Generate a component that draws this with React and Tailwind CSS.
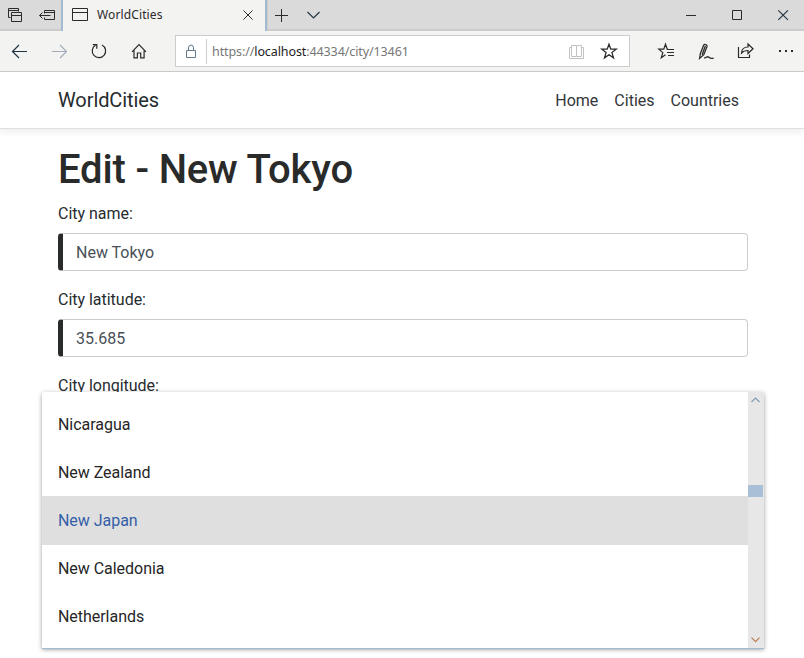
const STROKE = "#2b2b2b";

// Each icon's viewBox uses the coordinates of the browser window.
function Glyph({ x, y, w, h, color = STROKE, sw = 1, children }) {
  return (
    <svg
      className="block shrink-0"
      width={w}
      height={h}
      viewBox={`${x} ${y} ${w} ${h}`}
      fill="none"
      stroke={color}
      strokeWidth={sw}
      aria-hidden="true"
    >
      {children}
    </svg>
  );
}

function TabBar() {
  return (
    <div className="flex h-[31px] border-b-2 border-[#cdcccb] bg-[#dadada]">
      <div className="flex h-[31px] w-[63px] shrink-0 border-r-2 border-[#a3bbd2]">
        <Glyph x={0} y={0} w={30} h={31}>
          <path d="M10.5 17.5h-2v-9h10v3M8.5 10.5h10" />
          <path d="M11.5 12.5h10v9h-10zM11.5 15.5h10" />
        </Glyph>
        <Glyph x={30} y={0} w={31} h={31}>
          <path d="M44.5 13.5v-3h10v9h-10v-2M44.5 12.5h10M39.5 15.5h11M42.5 12.5l-3 3 3 3" />
        </Glyph>
      </div>
      <div className="flex h-[31px] w-[202px] shrink-0 bg-[#f3f3f2] font-['Noto_Sans','Open_Sans',sans-serif]">
        <Glyph x={63} y={0} w={34} h={31}>
          <path d="M72.5 8.5h15v12h-15zM72.5 12.5h15" />
        </Glyph>
        <span className="w-[140px] text-[12px] leading-[30px] tracking-[0.12px] text-[#2b2b2b]">WorldCities</span>
        <Glyph x={237} y={0} w={28} h={31}>
          <path d="M243.5 10.5l9 9M252.5 10.5l-9 9" />
        </Glyph>
      </div>
      <div className="h-[31px] w-[3px] shrink-0 border-l-2 border-[#a3bbd2] bg-[#cdcccb]" />
      <Glyph x={268} y={0} w={30} h={31}>
        <path d="M275 15.5h13M281.5 9v13" />
      </Glyph>
      <Glyph x={298} y={0} w={30} h={31} color="#243744" sw={1.2}>
        <path d="M307.5 12l6 6 6-6" />
      </Glyph>
      <div className="flex-1" />
      <Glyph x={668} y={0} w={46} h={31}>
        <path d="M686 15.5h10" />
      </Glyph>
      <Glyph x={714} y={0} w={46} h={31}>
        <path d="M732.5 10.5h9v9h-9z" />
      </Glyph>
      <Glyph x={760} y={0} w={44} h={31} color="#243744" sw={1.2}>
        <path d="M778.3 10.3l9.6 9.6M787.9 10.3l-9.6 9.6" />
      </Glyph>
    </div>
  );
}

function AddressBar() {
  return (
    <div className="flex h-8 w-[455px] shrink-0 items-center border border-[#cccccc] bg-white">
      <Glyph x={176} y={36} w={30} h={30} color="#64788c">
        <path d="M186.5 50.5h9v7h-9zM188.5 50.5v-2.5a2.5 3 0 0 1 5 0v2.5" />
      </Glyph>
      <div className="h-[25px] w-px bg-[#cccccc]" />
      <span className="ml-[5px] flex-1 pt-px font-['Noto_Sans','Open_Sans',sans-serif] text-[12.5px] leading-[30px] tracking-[-0.1px] text-[#777777]">
        https://<span className="text-[#222222]">localhost</span>:44334/city/13461
      </span>
      <Glyph x={560} y={36} w={33} h={30} color="#c2c2c2">
        <path d="M571.5 45.5h5v11h-5zM576.5 45.5h5v11h-5M571.5 47.5h-2v11h14v-11h-2" />
      </Glyph>
      <Glyph x={593} y={36} w={36} h={30} sw={1.3}>
        <path d="M609 44.2l1.8 5h5.4l-4.3 3.4 1.6 5.3-4.5-3.2-4.5 3.2 1.6-5.3-4.3-3.4h5.4z" />
      </Glyph>
    </div>
  );
}

function Toolbar() {
  return (
    <div className="flex h-[41px] items-center border-b border-[#cccccc] bg-[#f3f3f2]">
      <Glyph x={0} y={31} w={40} h={40} sw={1.2} color="#1f3442">
        <path d="M27 51.5H12.5M19 45l-6.5 6.5L19 58" />
      </Glyph>
      <Glyph x={40} y={31} w={40} h={40} sw={1.1} color="#a0adb9">
        <path d="M52 51.5h14.5M60 45l6.5 6.5L60 58" />
      </Glyph>
      <Glyph x={80} y={31} w={40} h={40} sw={1.2}>
        <path d="M102 45a6.7 6.7 0 1 1-6.5.2M92.8 44.7h4v4" />
      </Glyph>
      <Glyph x={120} y={31} w={55} h={40} sw={1.2}>
        <path d="M132 51.8l7-7.2 7 7.2M134 50.5v7.3h3.4v-4.8h3.3v4.8h3.4v-7.3" />
      </Glyph>
      <AddressBar />
      <Glyph x={630} y={31} w={56} h={40} sw={1.2}>
        <path d="M668 49.2h-.8l-1.7-5-1.7 5h-5l4 3.4-1.5 5.2 4.2-3.1M667 49.5h7M667 52.5h7M668 55.5h6" />
      </Glyph>
      <Glyph x={686} y={31} w={38} h={40} sw={1.3}>
        <path d="M699.6 58.4l.8-4.9 3.2-8.2c.8-1.7 3.9-.6 3.4 1.2l-3.2 8.2-4.2 3.7zM705.3 46l-3.2 8.8" />
        <path d="M704.2 57.6c1.6.9 2.3-1.2 3.9-.8 1.7.5 1 2.2 5.6 1.3" />
      </Glyph>
      <Glyph x={724} y={31} w={42} h={40} sw={1.2}>
        <path d="M738.5 47v10.5h11v-3M741.5 53c.3-4 3-6 6.5-6v-3l5 4.7-5 4.8v-3c-3 0-5 .8-6.5 2.5z" />
      </Glyph>
      <Glyph x={766} y={31} w={38} h={40} color="none">
        <path fill={STROKE} d="M779 50h2v2h-2zM785 50h2v2h-2zM791 50h2v2h-2z" />
      </Glyph>
    </div>
  );
}

function Field({ label, value }) {
  return (
    <div className="mb-4">
      <label className="mb-[7px] block pt-px leading-6 tracking-[-0.02px]">{label}</label>
      <input
        readOnly
        defaultValue={value}
        className="block h-[38px] w-full rounded border border-l-[5px] border-[#cccccc] border-l-[#292b2a] bg-white px-[13px] leading-6 text-[#495057] outline-none"
      />
    </div>
  );
}

const COUNTRIES = ["Nicaragua", "New Zealand", "New Japan", "New Caledonia", "Netherlands"];

function CountryPanel() {
  return (
    <div className="absolute top-[392px] left-[42px] flex h-64 w-[722px] rounded-t-[2px] bg-white shadow-[0_1px_0_#a3bbd2,0_2px_4px_-1px_rgba(0,0,0,0.3),0_1px_4px_1px_rgba(0,0,0,0.16)]">
      <ul className="flex-1 py-2 tracking-[-0.04px]">
        {COUNTRIES.map((name) => (
          <li
            key={name}
            className={
              name === "New Japan"
                ? "h-12 bg-[#dfdfdf] px-4 leading-[50px] text-[#345ea8] shadow-[0_1px_0_#dfdfdf]"
                : "h-12 px-4 leading-[50px] text-[#262626]"
            }
          >
            {name}
          </li>
        ))}
      </ul>
      <div className="flex w-4 flex-col bg-[#e7e7e7]">
        <Glyph x={748} y={392} w={16} h={17} color="#849cb4" sw={1.2}>
          <path d="M751.5 402l4-4 4 4" />
        </Glyph>
        <div className="mt-[76px] h-3 w-[15px] bg-[#a8bfd7]" />
        <div className="flex-1" />
        <Glyph x={748} y={632} w={16} h={16} color="#b9794f" sw={1.1}>
          <path d="M751.5 637.7l4 4 4-4" />
        </Glyph>
      </div>
    </div>
  );
}

export default function App() {
  return (
    <div className="relative h-[658px] w-[804px] overflow-hidden bg-white font-[Roboto,sans-serif] text-base text-[#262b2e]">
      <TabBar />
      <Toolbar />
      <header className="mb-4 flex h-[57px] items-center border-b border-[#dedede] pr-[65px] pl-[58px] shadow-[0_3px_7px_rgba(0,0,0,0.07)]">
        <span className="text-xl tracking-[-0.08px]">WorldCities</span>
        <nav className="ml-auto flex gap-4 pt-0.5 text-[#33363a]">
          <span>Home</span>
          <span>Cities</span>
          <span>Countries</span>
        </nav>
      </header>
      <main className="pr-14 pl-[58px]">
        <h1 className="mb-[7px] pt-px text-[40px] leading-[48px] font-medium tracking-[-0.16px] text-[#292b2a]">
          Edit - New Tokyo
        </h1>
        <Field label="City name:" value="New Tokyo" />
        <Field label="City latitude:" value="35.685" />
        <Field label="City longitude:" value="139.751" />
      </main>
      <CountryPanel />
    </div>
  );
}
